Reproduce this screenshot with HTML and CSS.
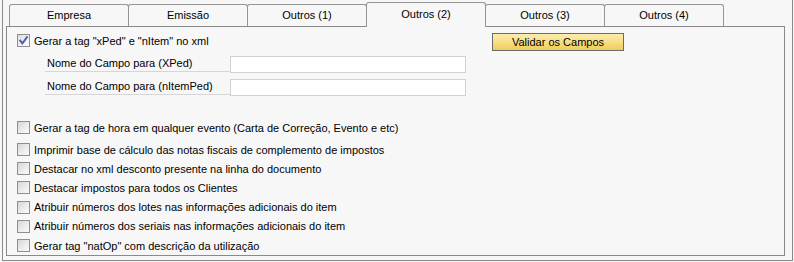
FILE: index.html
```html
<!DOCTYPE html>
<html lang="pt">
<head>
<meta charset="utf-8">
<title>Outros (2)</title>
<link rel="stylesheet" href="styles.css">
</head>
<body>
<div class="frame">
  <div class="tabs">
    <div class="tab">Empresa</div>
    <div class="tab">Emissão</div>
    <div class="tab">Outros (1)</div>
    <div class="tab active">Outros (2)</div>
    <div class="tab">Outros (3)</div>
    <div class="tab">Outros (4)</div>
  </div>
  <div class="panel">
    <div class="top">
      <div class="left">
        <div class="chk-row">
          <span class="cb checked"><svg viewBox="0 0 11 11" width="11" height="11"><polyline points="2.2,5.6 4.4,8.4 9,2.2" fill="none" stroke="#4760b0" stroke-width="1.9" stroke-linecap="square"/></svg></span>
          <span class="txt">Gerar a tag "xPed" e "nItem" no xml</span>
        </div>
        <div class="field first">
          <span class="flabel">Nome do Campo para (XPed)</span>
          <span class="input"></span>
        </div>
        <div class="field">
          <span class="flabel">Nome do Campo para (nItemPed)</span>
          <span class="input"></span>
        </div>
      </div>
      <button class="btn" type="button">Validar os Campos</button>
    </div>
    <div class="chk-row hora">
      <span class="cb"></span>
      <span class="txt">Gerar a tag de hora em qualquer evento (Carta de Correção, Evento e etc)</span>
    </div>
    <div class="list">
      <div class="chk-row item"><span class="cb"></span><span class="txt">Imprimir base de cálculo das notas fiscais de complemento de impostos</span></div>
      <div class="chk-row item"><span class="cb"></span><span class="txt">Destacar no xml desconto presente na linha do documento</span></div>
      <div class="chk-row item"><span class="cb"></span><span class="txt">Destacar impostos para todos os Clientes</span></div>
      <div class="chk-row item"><span class="cb"></span><span class="txt">Atribuir números dos lotes nas informações adicionais do item</span></div>
      <div class="chk-row item"><span class="cb"></span><span class="txt">Atribuir números dos seriais nas informações adicionais do item</span></div>
      <div class="chk-row item"><span class="cb"></span><span class="txt">Gerar tag "natOp" com descrição da utilização</span></div>
    </div>
  </div>
</div>
</body>
</html>
```

FILE: styles.css
```css
html, body {
  margin: 0;
  padding: 0;
  background: #f7f7f7;
}
body {
  font-family: "Liberation Sans", Arial, sans-serif;
  font-size: 11px;
  color: #000;
}
.frame {
  margin-left: 2px;
  width: 789px;
  height: 260px;
  border: 1px solid #8a8a8a;
  border-top: none;
}
.tabs {
  display: flex;
  align-items: flex-end;
  height: 26px;
  padding-left: 6px;
}
.tab {
  width: 118px;
  height: 21px;
  line-height: 21px;
  border: 1px solid #959595;
  border-bottom: none;
  border-radius: 3px 3px 0 0;
  margin-right: -1px;
  text-align: center;
  background: #f7f7f7;
}
.tab.active {
  height: 24px;
  line-height: 23px;
  margin-bottom: -1px;
  position: relative;
  z-index: 1;
}
.panel {
  margin-left: 3px;
  width: 767px;
  height: 222px;
  padding: 6px 0 0 10px;
  border: 1px solid #8a8a8a;
}
.top {
  display: flex;
  align-items: flex-start;
}
.left {
  width: 449px;
}
.chk-row {
  display: flex;
  align-items: center;
  height: 15px;
}
.cb {
  flex: none;
  width: 13px;
  height: 13px;
  box-sizing: border-box;
  border: 1px solid #8f8f8f;
  background: linear-gradient(135deg, #d6d6d6 0%, #ececec 55%, #fafafa 100%);
  display: flex;
  align-items: center;
  justify-content: center;
}
.cb.checked {
  background: linear-gradient(135deg, #dcdcdc 0%, #f0f0f0 55%, #fcfcfc 100%);
}
.txt {
  margin-left: 4px;
  white-space: nowrap;
}
.field {
  display: flex;
  margin-left: 28px;
  margin-top: 6px;
  height: 17px;
}
.field.first {
  margin-top: 8px;
}
.flabel {
  width: 186px;
  height: 16px;
  line-height: 15px;
  padding-left: 2px;
  box-sizing: border-box;
  border-bottom: 1px solid #d6d6d6;
  white-space: nowrap;
}
.input {
  width: 236px;
  height: 17px;
  box-sizing: border-box;
  border: 1px solid #cfd3d8;
  background: #fff;
  margin-left: -1px;
}
.btn {
  margin-left: 26px;
  width: 132px;
  height: 18px;
  padding: 0;
  border: 1px solid #6b6b6b;
  background: linear-gradient(#fcecae 0%, #f8df86 50%, #f2cb58 100%);
  font-family: "Liberation Sans", Arial, sans-serif;
  font-size: 11px;
  color: #000;
  line-height: 15px;
}
.hora {
  margin-top: 24px;
}
.list {
  margin-top: 5px;
}
.item {
  height: 19.2px;
}
```
